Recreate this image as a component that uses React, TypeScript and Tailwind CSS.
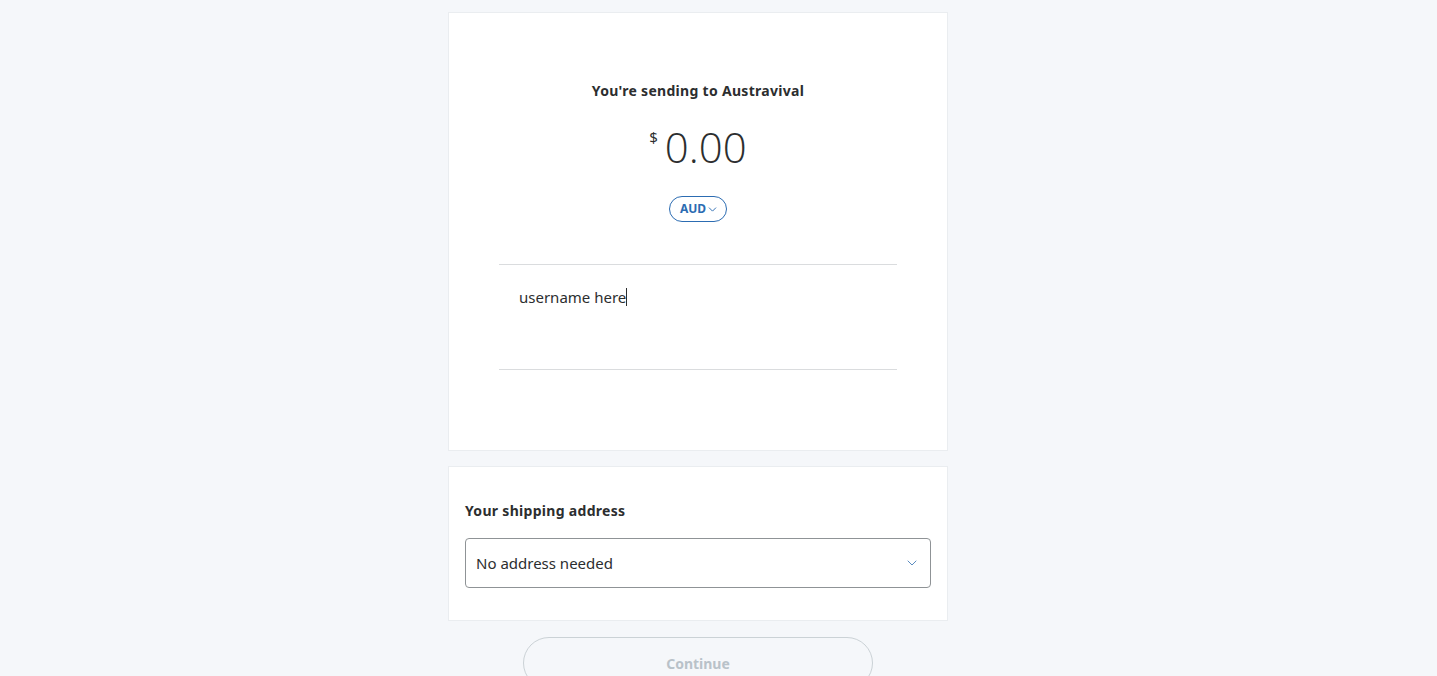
import { ChevronDown } from "lucide-react";

export default function App() {
  return (
    <div
      className="min-h-screen bg-[#f5f7fa] text-[#2c2e2f]"
      style={{ fontFamily: '"Noto Sans", "Open Sans", Arial, sans-serif' }}
    >
      <div className="ml-[448px] w-[500px] pt-[12px] flex flex-col">
        <section className="bg-white border border-[#eaedf0] flex flex-col items-center pt-[69px] pb-[80px]">
          <h1 className="text-[14px] font-bold leading-[18px] tracking-[0.3px]">You're sending to Austravival</h1>
          <div className="flex items-start mt-[24px] h-[46px]">
            <span className="text-[15px] leading-[15px] mt-[6px] mr-[7px]">$</span>
            <span
              className="text-[42px] leading-[46px] font-light"
              style={{ fontFamily: '"Open Sans", "Noto Sans", sans-serif' }}
            >
              0.00
            </span>
          </div>
          <button className="mt-[26px] h-[26px] pl-[10px] pr-[7px] rounded-full border border-[#2c6cb2] text-[#2c6cb2] text-[12px] font-bold flex items-center">
            AUD
            <ChevronDown size={13} strokeWidth={1.75} />
          </button>
          <div className="mt-[42px] w-[398px] h-[106px] border-t border-b border-[#dadcde] px-[20px] pt-[22px]">
            <p className="text-[15px] leading-[20px] flex items-center">
              username here
              <span className="inline-block w-px h-[18px] bg-[#2c2e2f]" />
            </p>
          </div>
        </section>

        <section className="mt-[15px] bg-white border border-[#eaedf0] px-[16px] pt-[35px] pb-[32px]">
          <h2 className="text-[14px] font-bold leading-[18px] tracking-[0.3px]">Your shipping address</h2>
          <div className="mt-[18px] h-[50px] border border-[#8f9396] rounded-[4px] flex items-center justify-between pl-[10px] pr-[10px]">
            <span className="text-[15px]">No address needed</span>
            <ChevronDown size={16} strokeWidth={1.5} className="text-[#5b8cc0]" />
          </div>
        </section>

        <button className="mt-[16px] self-center w-[350px] h-[52px] rounded-full border border-[#cbd2d6] bg-[#f5f7fa] text-[#b9c2c9] text-[14px] font-bold flex items-center justify-center">
          Continue
        </button>
      </div>
    </div>
  );
}
